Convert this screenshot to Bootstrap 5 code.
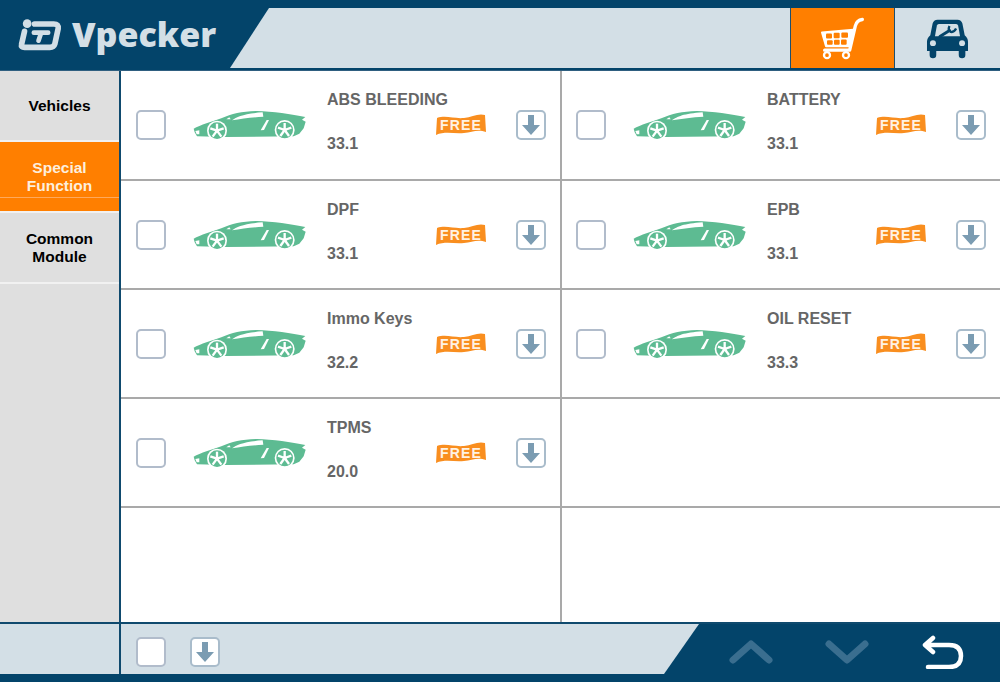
<!DOCTYPE html>
<html lang="en">
<head>
    <meta charset="UTF-8">
    <meta name="viewport" content="width=device-width, initial-scale=1.0">
    <title>Vpecker Special Function</title>
    <link href="https://cdn.jsdelivr.net/npm/bootstrap@5.3.0/dist/css/bootstrap.min.css" rel="stylesheet">
    <style>
        html, body { height: 100%; overflow: hidden; }
        body { font-family: "Liberation Sans", Arial, sans-serif; background-color: #fff; }
        .vp-app { width: 1000px; height: 682px; }
        .vp-top { height: 71px; padding: 8px 0 2px; background-color: #03446a; border-bottom: 1px solid #2f5f80; }
        .vp-brand { width: 230px; margin-top: -8px; padding-left: 17px; gap: 8px; }
        .vp-brand-name { font-family: "Open Sans", sans-serif; font-weight: 800; font-size: 34px; line-height: 1; color: #d3dfe6; }
        .vp-slant { background-color: #d3dfe6; clip-path: polygon(39px 0, 100% 0, 100% 100%, 0 100%); }
        .vp-cart { width: 105px; background-color: #ff7f00; border-right: 1px solid #1d4f6e; border-left: 1px solid #1d4f6e; }
        .vp-garage { width: 105px; background-color: #d3dfe6; }
        .vp-side { width: 119px; background-color: #dfdfdf; flex: none; }
        .vp-side-item { height: 71px; border-bottom: 2px solid #f1f1f1; font-size: 15.5px; font-weight: 700; line-height: 18px; color: #000; text-align: center; }
        .vp-side-item.active { background: linear-gradient(#ff7f00 55px, #ffa95c 55px, #ffa95c 56px, #ff7f00 56px); color: #fdeedd; }
        .vp-main { border-left: 2px solid #0f4a6e; display: grid; grid-template-columns: 441px 438px; grid-template-rows: 110px 109px 109px 109px 1fr; }
        .vp-cell { border-bottom: 2px solid #a9a9a9; padding-left: 15px; }
        .vp-cell:nth-child(odd) { border-right: 2px solid #a9a9a9; }
        .vp-cell:nth-child(even) { padding-left: 14px; }
        .vp-cell:nth-last-child(-n+2) { border-bottom: 0; }
        .vp-check { width: 30px; height: 30px; background-color: #fff; border: 2px solid #b1bccb; border-radius: 5px; flex: none; }
        .vp-car { width: 115px; height: 34px; margin-left: 26px; flex: none; }
        .vp-info { width: 109px; margin-left: 20px; padding-top: 20px; gap: 26px; flex: none; align-self: flex-start; font-size: 16px; font-weight: 700; line-height: 18px; color: #666; white-space: nowrap; }
        .vp-flag { width: 50px; height: 22px; flex: none; }
        .vp-get { width: 30px; height: 30px; margin-left: 30px; flex: none; background-color: #fff; border: 2px solid #a9bccb; border-radius: 5px; }
        .vp-foot { height: 60px; padding-bottom: 8px; background-color: #03446a; border-top: 2px solid #0f4a6e; }
        .vp-foot-side { width: 119px; background-color: #d3dfe6; }
        .vp-foot-bar { width: 580px; padding: 5px 0 0 15px; gap: 24px; background-color: #d3dfe6; border-left: 2px solid #0f4a6e; clip-path: polygon(0 0, 100% 0, calc(100% - 35px) 100%, 0 100%); }
        .vp-foot-bar .vp-get { margin-left: 0; }
        .vp-foot-btns { padding: 5px 0 0 30px; }
        .vp-next { margin-left: 52px; }
        .vp-back { margin-left: 53px; }
        .vp-flag-text { font-family: "Liberation Sans", Arial, sans-serif; font-weight: 700; font-size: 14px; letter-spacing: 1.2px; fill: #fff2e4; }
    </style>
</head>
<body>
    <svg width="0" height="0" class="position-absolute">
        <symbol id="ic-car" viewBox="200 105 345 90">
            <path fill="#5dbb92" d="M205 161 C225 150 260 140 288 130 C320 116 350 109 395 108 C440 109 500 118 540 126 L530 134 L541 140 L535 160 L522 176 L505 184 L300 186 L215 184 L208 172 Z"/>
            <path fill="#fff" d="M320 136 C335 125 355 116 412 112 L414 125 C380 127 350 131 320 136 Z"/>
            <path fill="#fff" d="M303 133 L312 127 L316 133 Z"/>
            <path fill="#fff" d="M406 166 L416 165 L431 135 L424 135 Z"/>
            <path fill="#fff" d="M210 168 L222 166 L222 178 L214 178 Z"/>
            <g id="ic-wheel">
                <circle cx="275" cy="167" r="30" fill="#fff"/>
                <circle cx="275" cy="167" r="25" fill="#5dbb92"/>
                <g stroke="#fff" stroke-width="7"><path d="M275 167 L275 146"/><path d="M275 167 L295 160"/><path d="M275 167 L288 185"/><path d="M275 167 L262 185"/><path d="M275 167 L255 160"/></g>
                <circle cx="275" cy="167" r="6" fill="#fff"/>
            </g>
            <use href="#ic-wheel" x="203" y="-2"/>
        </symbol>
        <symbol id="ic-down" viewBox="0 0 26 26">
            <path fill="#7b9cb2" d="M10 3 H16 V13 H22 L13 23 L4 13 H10 Z"/>
        </symbol>
        <symbol id="ic-flag" viewBox="0 0 50 22">
            <path fill="#f98e1f" d="M1 4 C10 1 18 5 28 4 C36 3 42 -1 49 1 L50 18 C42 15 36 18 28 19 C18 20 9 17 0 21 Z"/>
        </symbol>
    </svg>

    <div class="vp-app d-flex flex-column">
        <div class="vp-top d-flex">
            <div class="vp-brand d-flex align-items-center">
                <svg width="47" height="35" viewBox="20 15 140 105">
                    <g fill="none" stroke="#d3dfe6" stroke-linecap="round" stroke-linejoin="round">
                        <path stroke-width="17" d="M42 58 L33 98 Q31 106 42 106 H118 Q130 106 133 96 L143 50 Q145 36 130 36 H72"/>
                        <path stroke-width="14" d="M70 62 H113 M92 62 L84 86"/>
                    </g>
                    <circle cx="50" cy="35" r="13" fill="#d3dfe6"/>
                </svg>
                <span class="vp-brand-name">Vpecker</span>
            </div>
            <div class="vp-slant flex-grow-1"></div>
            <div class="vp-cart d-flex align-items-center justify-content-center">
                <svg width="50" height="47" viewBox="170 40 150 140" fill="none" stroke="#fff" stroke-linecap="round" stroke-linejoin="round">
                    <path stroke-width="10" d="M303 53 C290 55 285 60 282 72 L265 145 H190"/>
                    <path fill="#fff" stroke-width="6" d="M182 92 L276 84 L263 133 H194 Z"/>
                    <g fill="#ff7f00" stroke="none">
                        <rect x="194" y="95" width="18" height="15" rx="3"/><rect x="217" y="93" width="18" height="16" rx="3"/><rect x="240" y="92" width="20" height="16" rx="3"/>
                        <rect x="197" y="115" width="17" height="14" rx="3"/><rect x="218" y="114" width="17" height="15" rx="3"/><rect x="239" y="113" width="17" height="16" rx="3"/>
                    </g>
                    <circle cx="197" cy="160" r="9" stroke-width="7"/>
                    <circle cx="254" cy="160" r="9" stroke-width="7"/>
                </svg>
            </div>
            <div class="vp-garage d-flex align-items-center justify-content-center">
                <svg width="47" height="43" viewBox="490 45 140 130">
                    <path fill="#03446a" d="M530 53 H590 Q602 53 605 65 L612 100 Q622 108 622 120 V148 H498 V120 Q498 108 508 100 L515 65 Q518 53 530 53 Z"/>
                    <path fill="#d3dfe6" d="M534 66 H586 Q591 66 592 71 L598 103 H522 L528 71 Q529 66 534 66 Z"/>
                    <path fill="#03446a" d="M506 148 H526 V160 Q526 170 516 170 Q506 170 506 160 Z M594 148 H614 V160 Q614 170 604 170 Q594 170 594 160 Z"/>
                    <circle cx="516" cy="124" r="9" fill="#d3dfe6"/>
                    <circle cx="604" cy="124" r="9" fill="#d3dfe6"/>
                    <path fill="none" stroke="#03446a" stroke-width="9" stroke-linecap="round" d="M537 104 L566 86"/>
                    <path fill="none" stroke="#03446a" stroke-width="7" d="M566 72 Q560 84 570 90 Q580 92 586 80"/>
                </svg>
            </div>
        </div>

        <div class="d-flex flex-grow-1 overflow-hidden">
            <div class="vp-side">
                <div class="vp-side-item d-flex align-items-center justify-content-center">Vehicles</div>
                <div class="vp-side-item active d-flex align-items-center justify-content-center">Special<br>Function</div>
                <div class="vp-side-item d-flex align-items-center justify-content-center">Common<br>Module</div>
            </div>
            <div class="vp-main flex-grow-1" id="grid"></div>
        </div>

        <div class="vp-foot d-flex">
            <div class="vp-foot-side"></div>
            <div class="vp-foot-bar d-flex align-items-center">
                <div class="vp-check"></div>
                <div class="vp-get d-flex align-items-center justify-content-center"><svg width="26" height="26"><use href="#ic-down"/></svg></div>
            </div>
            <div class="vp-foot-btns d-flex align-items-center">
                <svg width="44" height="24" viewBox="0 0 44 24" fill="none" stroke="#3a6e8f" stroke-width="7" stroke-linecap="round" stroke-linejoin="round"><path d="M4 20 L22 4 L40 20"/></svg>
                <svg class="vp-next" width="44" height="24" viewBox="0 0 44 24" fill="none" stroke="#3a6e8f" stroke-width="7" stroke-linecap="round" stroke-linejoin="round"><path d="M4 4 L22 20 L40 4"/></svg>
                <svg class="vp-back" width="42" height="34" viewBox="0 0 42 34" fill="none" stroke="#fff" stroke-width="4.5" stroke-linecap="round" stroke-linejoin="round"><path d="M11 3 L3 10 L11 17 M3 10 H27 Q39 10 39 21 Q39 32 27 32 H6"/></svg>
            </div>
        </div>
    </div>

    <script src="https://cdn.jsdelivr.net/npm/bootstrap@5.3.0/dist/js/bootstrap.bundle.min.js"></script>
    <script>
        const items = [
            ['ABS BLEEDING', '33.1'], ['BATTERY', '33.1'],
            ['DPF', '33.1'], ['EPB', '33.1'],
            ['Immo Keys', '32.2'], ['OIL RESET', '33.3'],
            ['TPMS', '20.0'], null, null, null
        ];
        const grid = document.getElementById('grid');
        items.forEach(function(item) {
            const cell = document.createElement('div');
            cell.className = 'vp-cell d-flex align-items-center';
            if (item) {
                cell.innerHTML =
                    '<div class="vp-check"></div>' +
                    '<svg class="vp-car"><use href="#ic-car"/></svg>' +
                    '<div class="vp-info d-flex flex-column"><span>' + item[0] + '</span><span>' + item[1] + '</span></div>' +
                    '<svg class="vp-flag" viewBox="0 0 50 22"><use href="#ic-flag"/><text class="vp-flag-text" x="25" y="16" text-anchor="middle">FREE</text></svg>' +
                    '<div class="vp-get d-flex align-items-center justify-content-center"><svg width="26" height="26"><use href="#ic-down"/></svg></div>';
            }
            grid.appendChild(cell);
        });
    </script>
</body>
</html>
